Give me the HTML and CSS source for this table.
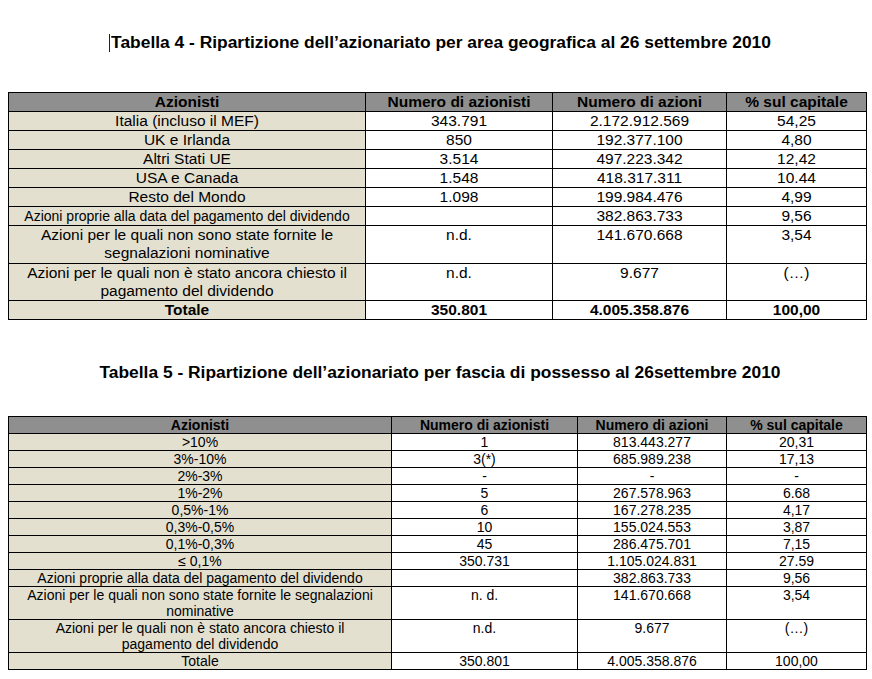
FILE: index.html
```html
<!DOCTYPE html>
<html lang="it">
<head>
<meta charset="utf-8">
<title>Tabelle azionariato</title>
<link rel="stylesheet" href="styles.css">
</head>
<body>
<div class="page">
  <h1 class="title t4"><span class="cursor"></span>Tabella 4 - Ripartizione dell’azionariato per area geografica al 26 settembre 2010</h1>
  <table class="grid g1">
    <colgroup><col class="c1"><col class="c2"><col class="c3"><col class="c4"></colgroup>
    <thead>
      <tr><th>Azionisti</th><th>Numero di azionisti</th><th>Numero di azioni</th><th>% sul capitale</th></tr>
    </thead>
    <tbody>
      <tr><td class="lab">Italia (incluso il MEF)</td><td>343.791</td><td>2.172.912.569</td><td>54,25</td></tr>
      <tr><td class="lab">UK e Irlanda</td><td>850</td><td>192.377.100</td><td>4,80</td></tr>
      <tr><td class="lab">Altri Stati UE</td><td>3.514</td><td>497.223.342</td><td>12,42</td></tr>
      <tr><td class="lab">USA e Canada</td><td>1.548</td><td>418.317.311</td><td>10.44</td></tr>
      <tr><td class="lab">Resto del Mondo</td><td>1.098</td><td>199.984.476</td><td>4,99</td></tr>
      <tr><td class="lab small">Azioni proprie alla data del pagamento del dividendo</td><td></td><td>382.863.733</td><td>9,56</td></tr>
      <tr class="two"><td class="lab">Azioni per le quali non sono state fornite le<br>segnalazioni nominative</td><td>n.d.</td><td>141.670.668</td><td>3,54</td></tr>
      <tr class="two short"><td class="lab">Azioni per le quali non è stato ancora chiesto il<br>pagamento del dividendo</td><td>n.d.</td><td>9.677</td><td>(…)</td></tr>
      <tr class="total"><td class="lab">Totale</td><td>350.801</td><td>4.005.358.876</td><td>100,00</td></tr>
    </tbody>
  </table>

  <h1 class="title t5">Tabella 5 - Ripartizione dell’azionariato per fascia di possesso al 26settembre 2010</h1>
  <table class="grid g2">
    <colgroup><col class="d1"><col class="d2"><col class="d3"><col class="d4"></colgroup>
    <thead>
      <tr><th>Azionisti</th><th>Numero di azionisti</th><th>Numero di azioni</th><th>% sul capitale</th></tr>
    </thead>
    <tbody>
      <tr><td class="lab">&gt;10%</td><td>1</td><td>813.443.277</td><td>20,31</td></tr>
      <tr><td class="lab">3%-10%</td><td>3(*)</td><td>685.989.238</td><td>17,13</td></tr>
      <tr><td class="lab">2%-3%</td><td>-</td><td>-</td><td>-</td></tr>
      <tr><td class="lab">1%-2%</td><td>5</td><td>267.578.963</td><td>6.68</td></tr>
      <tr><td class="lab">0,5%-1%</td><td>6</td><td>167.278.235</td><td>4,17</td></tr>
      <tr><td class="lab">0,3%-0,5%</td><td>10</td><td>155.024.553</td><td>3,87</td></tr>
      <tr><td class="lab">0,1%-0,3%</td><td>45</td><td>286.475.701</td><td>7,15</td></tr>
      <tr><td class="lab">≤ 0,1%</td><td>350.731</td><td>1.105.024.831</td><td>27.59</td></tr>
      <tr><td class="lab">Azioni proprie alla data del pagamento del dividendo</td><td></td><td>382.863.733</td><td>9,56</td></tr>
      <tr class="two"><td class="lab">Azioni per le quali non sono state fornite le segnalazioni<br>nominative</td><td>n. d.</td><td>141.670.668</td><td>3,54</td></tr>
      <tr class="two"><td class="lab">Azioni per le quali non è stato ancora chiesto il<br>pagamento del dividendo</td><td>n.d.</td><td>9.677</td><td>(…)</td></tr>
      <tr><td class="lab">Totale</td><td>350.801</td><td>4.005.358.876</td><td>100,00</td></tr>
    </tbody>
  </table>
</div>
</body>
</html>
```

FILE: styles.css
```css
html, body {
  margin: 0;
  padding: 0;
  background: #ffffff;
}

body {
  font-family: "Liberation Sans", Arial, Helvetica, sans-serif;
  color: #000;
}

.page {
  width: 872px;
  padding-top: 32px;
}

.title {
  margin: 0;
  font-size: 17.4px;
  font-weight: bold;
  line-height: 20px;
  height: 20px;
  text-align: center;
  padding-left: 8px;
  white-space: nowrap;
}

.cursor {
  display: inline-block;
  width: 1px;
  height: 18px;
  background: #222;
  vertical-align: -4px;
  margin-right: 1px;
}

.t4 {
  margin-bottom: 40px;
}

.t5 {
  margin-top: 42px;
  margin-bottom: 34px;
}

.grid {
  margin-left: 8px;
  border-collapse: collapse;
  table-layout: fixed;
  width: 858px;
  border: 1px solid #000;
}

.grid th,
.grid td {
  border: 1px solid #000;
  padding: 0 2px;
  text-align: center;
  vertical-align: top;
  white-space: nowrap;
  overflow: hidden;
}

.grid th {
  background: #8f8f8f;
  font-weight: bold;
}

.grid td.lab {
  background: #e4e0d0;
}

.g1 {
  font-size: 15.5px;
}

.g1 th,
.g1 td {
  line-height: 18px;
}

.g1 .two td {
  height: 37px;
}

.g1 .two.short td {
  height: 36px;
}

.g1 td.small {
  font-size: 14px;
}

.g1 .total td {
  font-weight: bold;
}

.g2 {
  font-size: 14px;
}

.g2 th,
.g2 td {
  line-height: 16px;
}

.g2 .two td {
  height: 32px;
}

.c1 { width: 357px; }
.c2 { width: 187px; }
.c3 { width: 174px; }
.c4 { width: 140px; }

.d1 { width: 383px; }
.d2 { width: 186px; }
.d3 { width: 149px; }
.d4 { width: 140px; }
```
